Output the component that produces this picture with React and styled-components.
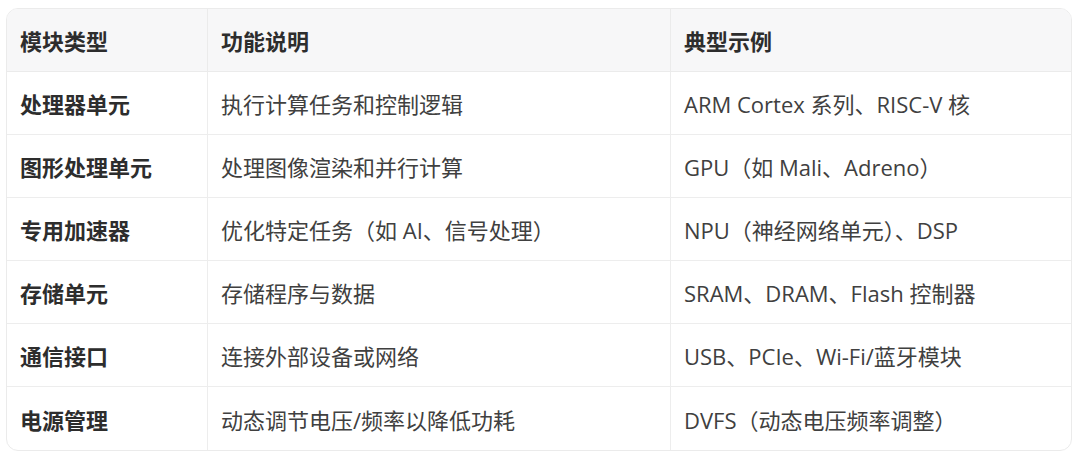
import styled, { createGlobalStyle } from "styled-components";

const rows = [
    { type: "处理器单元", desc: "执行计算任务和控制逻辑", example: "ARM Cortex 系列、RISC-V 核" },
    { type: "图形处理单元", desc: "处理图像渲染和并行计算", example: "GPU（如 Mali、Adreno）" },
    { type: "专用加速器", desc: "优化特定任务（如 AI、信号处理）", example: "NPU（神经网络单元）、DSP" },
    { type: "存储单元", desc: "存储程序与数据", example: "SRAM、DRAM、Flash 控制器" },
    { type: "通信接口", desc: "连接外部设备或网络", example: "USB、PCIe、Wi-Fi/蓝牙模块" },
    { type: "电源管理", desc: "动态调节电压/频率以降低功耗", example: "DVFS（动态电压频率调整）" },
];

const App = () => {
    return (
        <>
            <GlobalStyle />
            <Page>
                <Table>
                    <thead>
                        <tr>
                            <HeadCell $width={201}>模块类型</HeadCell>
                            <HeadCell $width={463}>功能说明</HeadCell>
                            <HeadCell>典型示例</HeadCell>
                        </tr>
                    </thead>
                    <tbody>
                        {rows.map((row) => (
                            <Row key={row.type}>
                                <Cell $bold>{row.type}</Cell>
                                <Cell>{row.desc}</Cell>
                                <Cell>{row.example}</Cell>
                            </Row>
                        ))}
                    </tbody>
                </Table>
            </Page>
        </>
    );
};

const GlobalStyle = createGlobalStyle`
    body {
        margin: 0;
        background: #ffffff;
        font-family: "Open Sans", "Noto Sans CJK SC", sans-serif;
    }
`;

const Page = styled.div`
    padding: 8px 8px 0 6px;
`;

const Table = styled.table`
    width: 1066px;
    border-collapse: separate;
    border-spacing: 0;
    border: 1px solid #ebebeb;
    border-radius: 12px;
    overflow: hidden;
    font-size: 22px;
`;

const HeadCell = styled.th`
    width: ${(p) => (p.$width ? `${p.$width}px` : "auto")};
    height: 63px;
    padding: 0 13px;
    box-sizing: border-box;
    text-align: left;
    font-weight: 700;
    color: #2d2d2d;
    background: #f7f7f8;
    border-bottom: 1px solid #ebebeb;
    border-right: 1px solid #ebebeb;

    &:last-child {
        border-right: none;
    }
`;

const Row = styled.tr`
    &:last-child td {
        border-bottom: none;
    }
`;

const Cell = styled.td`
    height: 63px;
    padding: 0 13px;
    box-sizing: border-box;
    font-weight: ${(p) => (p.$bold ? 700 : 400)};
    color: ${(p) => (p.$bold ? "#2d2d2d" : "#404040")};
    border-bottom: 1px solid #ededed;
    border-right: 1px solid #ededed;

    &:last-child {
        border-right: none;
    }
`;

export default App;
